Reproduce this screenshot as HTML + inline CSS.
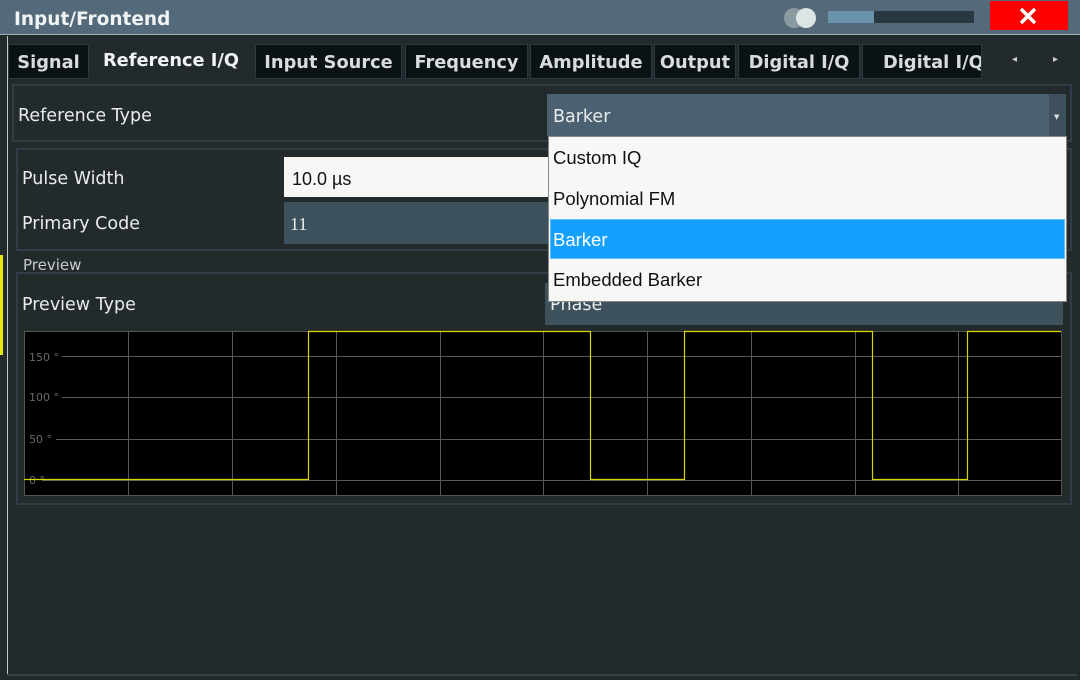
<!DOCTYPE html>
<html><head><meta charset="utf-8"><style>
*{box-sizing:border-box;margin:0;padding:0}
body{width:1080px;height:680px;background:#232a2b;font-family:"DejaVu Sans","Liberation Sans",sans-serif;color:#e8ecec;position:relative;overflow:hidden}
.abs{position:absolute}
.title{left:0;top:0;width:1080px;height:35px;background:#546a7a;border-bottom:1px solid #a0b0b8}
.tab{position:absolute;top:44px;height:35px;background:#0a1214;border:1px solid #2a3a44;font-size:17.8px;font-weight:bold;color:#d8dcdc;line-height:35px;text-align:center;white-space:nowrap}
.lbl{position:absolute;font-size:17.5px;color:#e8ecec}
.panel{position:absolute;border:2px solid #313c48}
.dd{position:absolute;font-family:"Liberation Sans",sans-serif;font-size:18.5px;color:#111}
</style></head><body>
<div class="abs title"></div>
<div class="abs" style="left:14px;top:9px;font-size:18.5px;font-weight:bold;color:#f0f4f4">Input/Frontend</div>
<div class="abs" style="left:784px;top:8px;width:20px;height:20px;border-radius:10px;background:#8a9aa0"></div>
<div class="abs" style="left:796px;top:8px;width:20px;height:20px;border-radius:10px;background:#dde4e4"></div>
<div class="abs" style="left:828px;top:11px;width:46px;height:12px;background:#6a92aa"></div>
<div class="abs" style="left:874px;top:11px;width:100px;height:12px;background:#283840"></div>
<div class="abs" style="left:990px;top:1px;width:78px;height:29px;background:#ff0000"></div>
<svg class="abs" style="left:1018px;top:6px" width="20" height="20"><path d="M3 3L17 17M17 3L3 17" stroke="#fff" stroke-width="3.5"/></svg>
<div class="abs" style="left:7px;top:36px;width:1px;height:640px;background:#c0c8c8"></div>
<div class="abs" style="left:0;top:255px;width:3px;height:100px;background:#e8e800"></div>
<div class="abs" style="left:7px;top:674px;width:1070px;height:2px;background:#34404c"></div>
<div class="tab" style="left:8px;width:81px">Signal</div>
<div class="tab" style="left:89px;width:164px;background:#232a2b;border-color:#232a2b;top:42px;color:#f0f4f4">Reference I/Q</div>
<div class="tab" style="left:255px;width:147px">Input Source</div>
<div class="tab" style="left:405px;width:123px">Frequency</div>
<div class="tab" style="left:530px;width:122px">Amplitude</div>
<div class="tab" style="left:654px;width:82px">Output</div>
<div class="tab" style="left:738px;width:122px">Digital I/Q</div>
<div class="tab" style="left:862px;width:120px;text-align:left;padding-left:20px;overflow:hidden;text-overflow:clip">Digital I/Q -</div>
<div class="abs" style="left:1012px;top:54px;font-size:10px;color:#ccc">◂</div>
<div class="abs" style="left:1053px;top:54px;font-size:10px;color:#ccc">▸</div>

<div class="panel" style="left:12px;top:84px;width:1060px;height:58px"></div>
<div class="lbl" style="left:18px;top:106px">Reference Type</div>
<div class="abs" style="left:547px;top:94px;width:519px;height:42px;background:#4b6070"></div>
<div class="abs" style="left:1049px;top:94px;width:17px;height:42px;background:#3d505c"></div>
<div class="abs" style="left:1054px;top:113px;font-size:7px;color:#ddd">▼</div>
<div class="lbl" style="left:553px;top:107px">Barker</div>

<div class="panel" style="left:16px;top:148px;width:1056px;height:103px"></div>
<div class="lbl" style="left:22px;top:169px">Pulse Width</div>
<div class="abs" style="left:284px;top:157px;width:270px;height:40px;background:#f6f8f6"></div>
<div class="abs" style="left:292px;top:169px;font-family:'Liberation Sans',sans-serif;font-size:18px;color:#111">10.0 µs</div>
<div class="lbl" style="left:22px;top:214px">Primary Code</div>
<div class="abs" style="left:284px;top:202px;width:270px;height:42px;background:#3d525c"></div>
<div class="abs" style="left:290px;top:214px;font-family:'Liberation Serif',serif;font-size:18px;color:#eee">11</div>

<div class="abs" style="left:23px;top:256px;font-size:15px;color:#c8cccc">Preview</div>
<div class="panel" style="left:16px;top:272px;width:1056px;height:233px"></div>
<div class="lbl" style="left:22px;top:295px">Preview Type</div>
<div class="abs" style="left:545px;top:283px;width:518px;height:42px;background:#3d525c"></div>
<div class="lbl" style="left:550px;top:295px">Phase</div>

<svg class="abs" style="left:0;top:0" width="1080" height="680">
<rect x="24.5" y="331.5" width="1037" height="164" fill="#000" stroke="#555"/>
<g stroke="#5a5a5a" stroke-width="1">
<path d="M128.5 331V496M232.5 331V496M336.5 331V496M440.5 331V496M543.5 331V496M647.5 331V496M751.5 331V496M855.5 331V496M958.5 331V496"/>
<path d="M62 356.5H1061M62 397.5H1061M56 439.5H1061M42 480.5H1061"/>
</g>
<g fill="#6a6a6a" font-family="DejaVu Sans" font-size="11">
<text x="29" y="361">150 °</text><text x="29" y="401">100 °</text><text x="29" y="443">50 °</text><text x="29" y="484">0 °</text>
</g>
<path d="M24 479.5H308.5V331.5H590.5V479.5H684.5V331.5H872.5V479.5H967.5V331.5H1061" fill="none" stroke="#d8d800" stroke-width="1.2"/>
</svg>

<div class="abs" style="left:548px;top:136px;width:519px;height:166px;background:#f6f8f6;border:1px solid #888"></div>
<div class="abs" style="left:550px;top:219px;width:515px;height:40px;background:#14a0ff;border:1px solid #60c0ff"></div>
<div class="dd" style="left:553px;top:147px">Custom IQ</div>
<div class="dd" style="left:553px;top:188px">Polynomial FM</div>
<div class="dd" style="left:553px;top:229px;color:#fff">Barker</div>
<div class="dd" style="left:553px;top:269px">Embedded Barker</div>
</body></html>
